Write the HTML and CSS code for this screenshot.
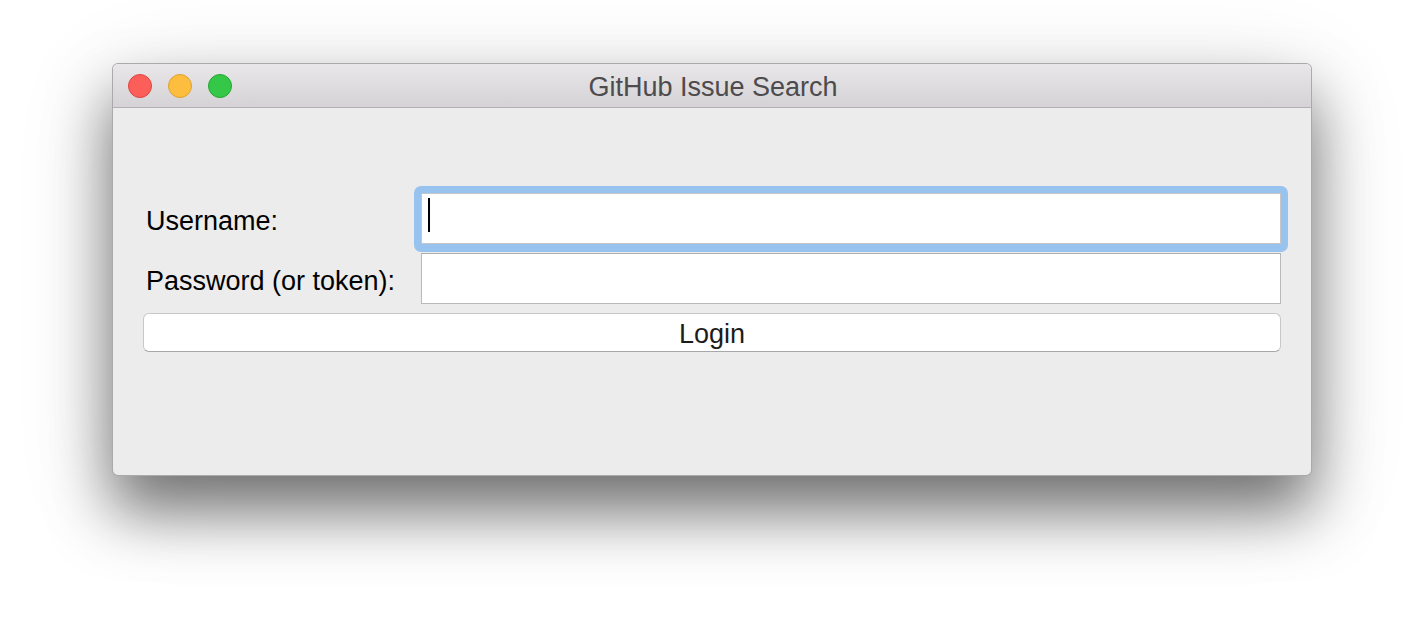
FILE: index.html
```html
<!DOCTYPE html>
<html lang="en">
<head>
<meta charset="utf-8">
<title>GitHub Issue Search</title>
<link rel="stylesheet" href="styles.css">
</head>
<body>
<div class="desktop">
  <div class="window">
    <div class="titlebar">
      <div class="lights">
        <span class="light red"></span>
        <span class="light yellow"></span>
        <span class="light green"></span>
      </div>
      <div class="title">GitHub Issue Search</div>
    </div>
    <div class="content">
      <div class="form">
        <label class="label">Username:</label>
        <div class="ring"><div class="field focused"><span class="caret"></span></div></div>
        <label class="label">Password (or token):</label>
        <div class="field"></div>
      </div>
      <div class="button">Login</div>
    </div>
  </div>
</div>
</body>
</html>
```
FILE: styles.css
```css
html, body {
  margin: 0;
  padding: 0;
  background: #ffffff;
}
body {
  font-family: "Liberation Sans", Arial, Helvetica, sans-serif;
}
.desktop {
  padding: 63px 0 0 112px;
  height: 636px;
  box-sizing: border-box;
}
.window {
  width: 1200px;
  box-sizing: border-box;
  border: 1px solid rgba(0, 0, 0, 0.28);
  border-radius: 6px;
  background: #ececec;
  box-shadow: 0 35px 60px rgba(0, 0, 0, 0.5), 0 20px 100px rgba(0, 0, 0, 0.14);
}
.titlebar {
  height: 43px;
  border-bottom: 1px solid #b3b1b3;
  border-radius: 5px 5px 0 0;
  background: linear-gradient(#e9e7e9, #d4d2d4);
  display: flex;
  align-items: center;
  position: relative;
}
.lights {
  display: flex;
  gap: 16px;
  padding-left: 15px;
}
.light {
  width: 24px;
  height: 24px;
  box-sizing: border-box;
  border-radius: 50%;
  display: block;
}
.red { background: #fc5f5a; border: 1px solid #e0443e; }
.yellow { background: #fdbd3f; border: 1px solid #dfa12d; }
.green { background: #34c748; border: 1px solid #24a732; }
.title {
  position: absolute;
  left: 0;
  right: 0;
  top: 0;
  bottom: 0;
  display: flex;
  align-items: center;
  justify-content: center;
  font-size: 27px;
  color: #4d4b4d;
  padding-top: 4px;
  padding-left: 2px;
  pointer-events: none;
}
.content {
  padding: 85px 30px 123px 30px;
}
.form {
  display: grid;
  grid-template-columns: 278px 1fr;
  grid-template-rows: 51px 51px;
  row-gap: 9px;
}
.label {
  display: flex;
  align-items: center;
  padding-left: 3px;
  padding-top: 5px;
  font-size: 27px;
  color: #000;
}
.ring {
  margin: -7px -7px -8px -7px;
  padding: 7px 7px 8px 7px;
  background: #98c3ef;
  border-radius: 7px;
  display: flex;
}
.field {
  flex: 1;
  box-sizing: border-box;
  height: 51px;
  background: #ffffff;
  border: 1px solid #b9b9b9;
  border-top-color: #aeaeae;
}
.field.focused {
  border-color: #c6c6c6;
  padding: 4px 0 0 6px;
}
.caret {
  display: block;
  width: 2px;
  height: 34px;
  background: #000;
}
.button {
  margin-top: 9px;
  height: 39px;
  box-sizing: border-box;
  padding-top: 3px;
  background: #ffffff;
  border: 1px solid #c8c8c8;
  border-bottom-color: #a8a8a8;
  border-radius: 6px;
  display: flex;
  align-items: center;
  justify-content: center;
  font-size: 27px;
  color: #1c1c1c;
}
```
